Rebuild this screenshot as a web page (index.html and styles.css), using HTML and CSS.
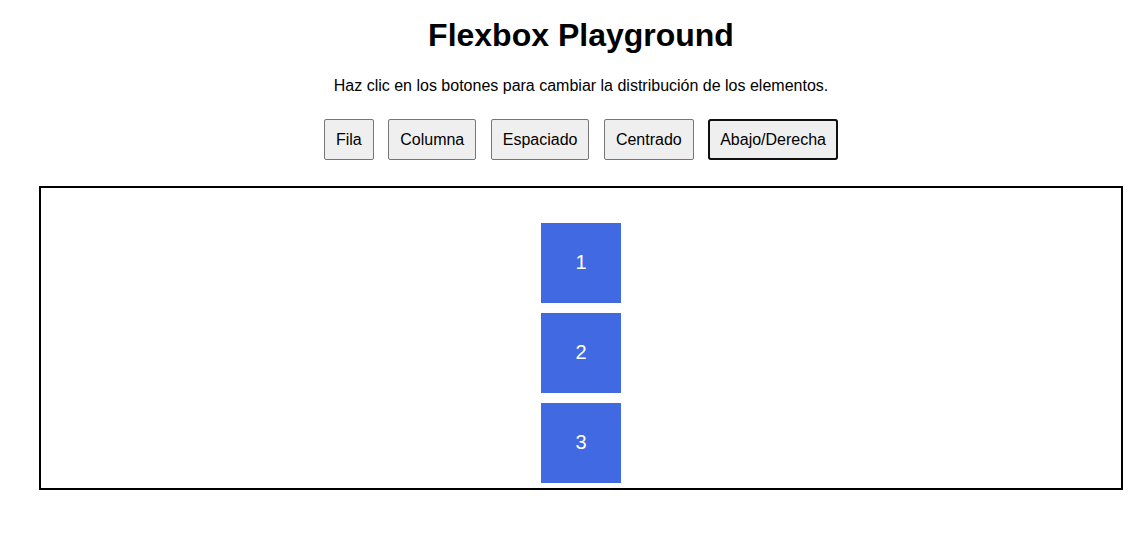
FILE: index.html
```html
<!DOCTYPE html>
<html lang="es">
<head>
<meta charset="utf-8">
<title>Flexbox Playground</title>
<link rel="stylesheet" href="styles.css">
</head>
<body>
<h1 class="title">Flexbox Playground</h1>
<p class="intro">Haz clic en los botones para cambiar la distribución de los elementos.</p>
<div class="controls">
  <button class="btn">Fila</button>
  <button class="btn">Columna</button>
  <button class="btn">Espaciado</button>
  <button class="btn">Centrado</button>
  <button class="btn btn-active">Abajo/Derecha</button>
</div>
<div class="stage">
  <div class="item">1</div>
  <div class="item">2</div>
  <div class="item">3</div>
</div>
</body>
</html>
```

FILE: styles.css
```css
html, body {
  background: #ffffff;
}
body {
  margin: 0;
  padding: 17px 0 0 14px;
  font-family: "Liberation Sans", Arial, sans-serif;
  color: #000;
  text-align: center;
}
.title {
  margin: 0;
  font-size: 32px;
  font-weight: bold;
  line-height: 37px;
}
.intro {
  margin: 23px 0 0;
  font-size: 16px;
  line-height: 18px;
}
.controls {
  margin-top: 24px;
  height: 41px;
}
.btn {
  margin: 0 5px;
  padding: 10px 11px;
  font-family: "Liberation Sans", Arial, sans-serif;
  font-size: 16px;
  line-height: 19px;
  color: #000;
  background: #efefef;
  border: 1px solid #767676;
  border-radius: 2px;
}
.btn-active {
  outline: 2px solid #101010;
  outline-offset: -2px;
  border-radius: 3px;
}
.stage {
  margin: 26px 25px 0;
  height: 300px;
  border: 2px solid #000;
  display: flex;
  flex-direction: column;
  justify-content: flex-end;
  align-items: center;
}
.item {
  width: 80px;
  height: 80px;
  margin: 5px;
  padding-bottom: 2px;
  box-sizing: border-box;
  background: #4169e1;
  color: #fff;
  font-size: 20px;
  display: flex;
  align-items: center;
  justify-content: center;
}
```
